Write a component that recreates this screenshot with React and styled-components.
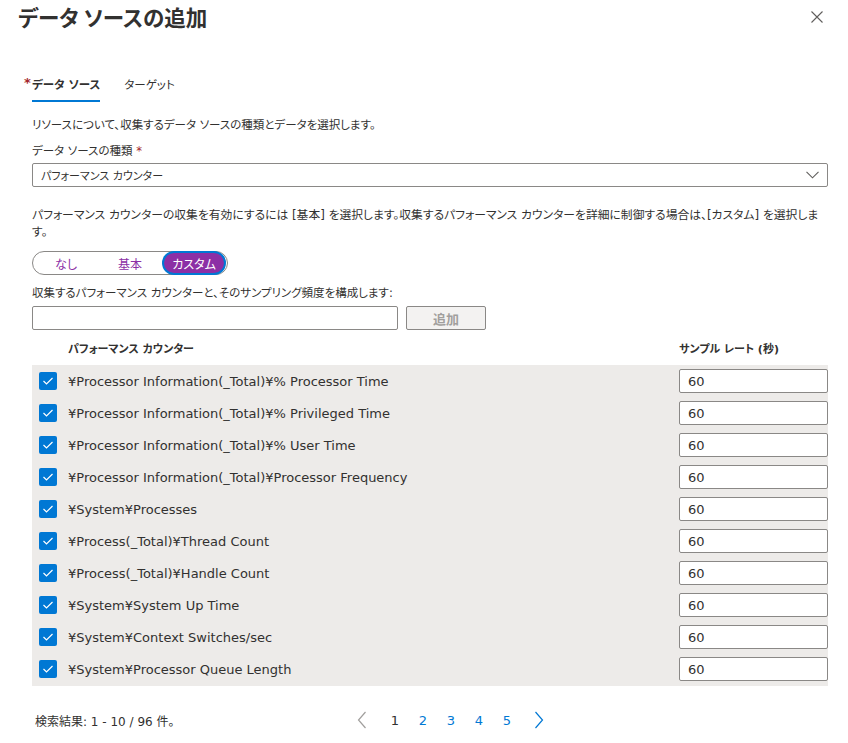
import React from "react";
import styled, { createGlobalStyle } from "styled-components";

const Global = createGlobalStyle`
  html, body { margin: 0; padding: 0; background: #fff; }
  body {
    font-family: "DejaVu Sans", "Noto Sans CJK JP", sans-serif;
    font-feature-settings: "palt";
    color: #323130;
    font-size: 13px;
  }
  * { box-sizing: border-box; }
`;

const Page = styled.div`
  width: 848px;
  height: 743px;
  overflow: hidden;
  display: flex;
  flex-direction: column;
`;

const Header = styled.div`
  height: 34px;
  display: flex;
  align-items: center;
  justify-content: space-between;
  padding: 0 24px 0 18px;
`;

const Title = styled.h1`
  margin: 0;
  font-size: 21.5px;
  font-weight: 600;
  line-height: 30px;
  font-family: "Noto Sans CJK JP", sans-serif;
`;

const CloseButton = styled.button`
  border: 0;
  background: none;
  padding: 0;
  width: 14px;
  height: 14px;
  display: flex;
  align-items: center;
  justify-content: center;
  color: #605e5c;
`;

const Body = styled.div`
  padding: 0 20px 0 32px;
  display: flex;
  flex-direction: column;
`;

const TabList = styled.div`
  margin-top: 38px;
  display: flex;
  gap: 24px;
`;

const Tab = styled.div`
  position: relative;
  line-height: 26px;
  font-size: 11.5px;
  padding-bottom: 2px;
  border-bottom: 2px solid ${(p) => (p.$active ? "#0078d4" : "transparent")};
  font-weight: ${(p) => (p.$active ? 600 : 400)};
`;

const Required = styled.span`
  position: absolute;
  left: -8px;
  top: -2px;
  color: #a4262c;
  font-weight: 600;
  font-size: 13px;
`;

const Text = styled.p`
  margin: ${(p) => p.$mt || 0}px 0 0;
  line-height: ${(p) => p.$lh || 18}px;
  font-size: ${(p) => p.$fs || 11.5}px;
`;

const Star = styled.span`
  color: #a4262c;
`;

const Dropdown = styled.div`
  margin-top: 3px;
  height: 24px;
  border: 1px solid #8a8886;
  border-radius: 2px;
  display: flex;
  align-items: center;
  justify-content: space-between;
  padding: 0 8px 0 8px;
  font-size: 11px;
`;

const Toggle = styled.div`
  margin-top: 10px;
  width: 196px;
  height: 24px;
  border: 1px solid #8a8886;
  border-radius: 12px;
  display: grid;
  grid-template-columns: 64px 64px 1fr;
  align-items: center;
  padding: 0 1px;
`;

const ToggleOption = styled.div`
  height: 20px;
  display: flex;
  align-items: center;
  justify-content: center;
  font-size: 12px;
  border-radius: 10px;
  color: ${(p) => (p.$selected ? "#fff" : "#8c2fa5")};
  background: ${(p) => (p.$selected ? "#8c2fa5" : "transparent")};
  box-shadow: ${(p) => (p.$selected ? "0 0 0 2px #0078d4" : "none")};
  margin: ${(p) => (p.$selected ? "0 2px 0 2px" : "0")};
`;

const AddRow = styled.div`
  margin-top: 4px;
  display: flex;
  gap: 8px;
`;

const TextInput = styled.div`
  width: ${(p) => p.$w}px;
  height: 24px;
  border: 1px solid #8a8886;
  border-radius: 2px;
  display: flex;
  align-items: center;
  padding: 0 8px;
  font-size: 13px;
  background: #fff;
`;

const AddButton = styled.button`
  width: 80px;
  height: 24px;
  border: 1px solid #8a8886;
  border-radius: 2px;
  background: #f3f2f1;
  color: #a19f9d;
  font-family: inherit;
  font-size: 13px;
  font-weight: 600;
  padding: 0;
`;

const Grid = styled.div`
  display: grid;
  grid-template-columns: 36px 1fr 149px;
  align-items: center;
`;

const HeadRow = styled(Grid)`
  height: 35px;
  font-weight: 700;
  font-size: 11px;
`;

const TableBody = styled.div`
  background: #edebe9;
  padding-bottom: 1px;
`;

const Row = styled(Grid)`
  height: 32px;
  font-size: 13px;
`;

const Check = styled.div`
  width: 18px;
  height: 18px;
  margin-left: 7px;
  border-radius: 2px;
  background: #0078d4;
  display: flex;
  align-items: center;
  justify-content: center;
`;

const Footer = styled.div`
  margin-top: 22px;
  height: 24px;
  display: grid;
  grid-template-columns: 313px auto;
  align-items: center;
  padding-left: 3px;
  font-size: 12px;
`;

const Pager = styled.div`
  display: flex;
  align-items: center;
`;

const PageBtn = styled.div`
  width: 28px;
  height: 24px;
  display: flex;
  align-items: center;
  justify-content: center;
  font-size: 13px;
  color: ${(p) => (p.$current ? "#323130" : "#0078d4")};
  margin-left: ${(p) => p.$ml || 0}px;
`;

const rows = [
  "¥Processor Information(_Total)¥% Processor Time",
  "¥Processor Information(_Total)¥% Privileged Time",
  "¥Processor Information(_Total)¥% User Time",
  "¥Processor Information(_Total)¥Processor Frequency",
  "¥System¥Processes",
  "¥Process(_Total)¥Thread Count",
  "¥Process(_Total)¥Handle Count",
  "¥System¥System Up Time",
  "¥System¥Context Switches/sec",
  "¥System¥Processor Queue Length",
];

const Chevron = ({ dir, color }) => (
  <svg width="10" height="18" viewBox="0 0 10 18">
    <polyline
      points={dir === "left" ? "8.5,1 1.5,9 8.5,17" : "1.5,1 8.5,9 1.5,17"}
      fill="none"
      stroke={color}
      strokeWidth="1.2"
    />
  </svg>
);

export default function App() {
  return (
    <Page>
      <Global />
      <Header>
        <Title>データ ソースの追加</Title>
        <CloseButton aria-label="close">
          <svg width="12" height="12" viewBox="0 0 12 12">
            <path d="M0.5 0.5 L11.5 11.5 M11.5 0.5 L0.5 11.5" stroke="#605e5c" strokeWidth="1.1" />
          </svg>
        </CloseButton>
      </Header>
      <Body>
        <TabList>
          <Tab $active>
            <Required>*</Required>データ ソース
          </Tab>
          <Tab>ターゲット</Tab>
        </TabList>
        <Text $mt={14}>リソースについて、収集するデータ ソースの種類とデータを選択します。</Text>
        <Text $mt={8}>
          データ ソースの種類 <Star>*</Star>
        </Text>
        <Dropdown>
          <span>パフォーマンス カウンター</span>
          <svg width="13" height="8" viewBox="0 0 13 8">
            <polyline points="0.5,0.8 6.5,6.8 12.5,0.8" fill="none" stroke="#605e5c" strokeWidth="1.1" />
          </svg>
        </Dropdown>
        <Text $mt={20} $lh={17} $fs={11.8}>
          パフォーマンス カウンターの収集を有効にするには [基本] を選択します。収集するパフォーマンス カウンターを詳細に制御する場合は、[カスタム] を選択します。
        </Text>
        <Toggle>
          <ToggleOption>なし</ToggleOption>
          <ToggleOption>基本</ToggleOption>
          <ToggleOption $selected>カスタム</ToggleOption>
        </Toggle>
        <Text $mt={9}>収集するパフォーマンス カウンターと、そのサンプリング頻度を構成します:</Text>
        <AddRow>
          <TextInput $w={366} />
          <AddButton>追加</AddButton>
        </AddRow>
        <HeadRow>
          <span />
          <span>パフォーマンス カウンター</span>
          <span>サンプル レート (秒)</span>
        </HeadRow>
        <TableBody>
          {rows.map((r) => (
            <Row key={r}>
              <Check>
                <svg width="12" height="10" viewBox="0 0 12 10">
                  <polyline points="1.5,5 4.5,8 10.5,2" fill="none" stroke="#fff" strokeWidth="1.2" />
                </svg>
              </Check>
              <span>{r}</span>
              <TextInput $w={149}>60</TextInput>
            </Row>
          ))}
        </TableBody>
        <Footer>
          <span>検索結果: 1 - 10 / 96 件。</span>
          <Pager>
            <PageBtn>
              <Chevron dir="left" color="#a19f9d" />
            </PageBtn>
            <PageBtn $current $ml={5}>1</PageBtn>
            <PageBtn>2</PageBtn>
            <PageBtn>3</PageBtn>
            <PageBtn>4</PageBtn>
            <PageBtn>5</PageBtn>
            <PageBtn $ml={4}>
              <Chevron dir="right" color="#0078d4" />
            </PageBtn>
          </Pager>
        </Footer>
      </Body>
    </Page>
  );
}
